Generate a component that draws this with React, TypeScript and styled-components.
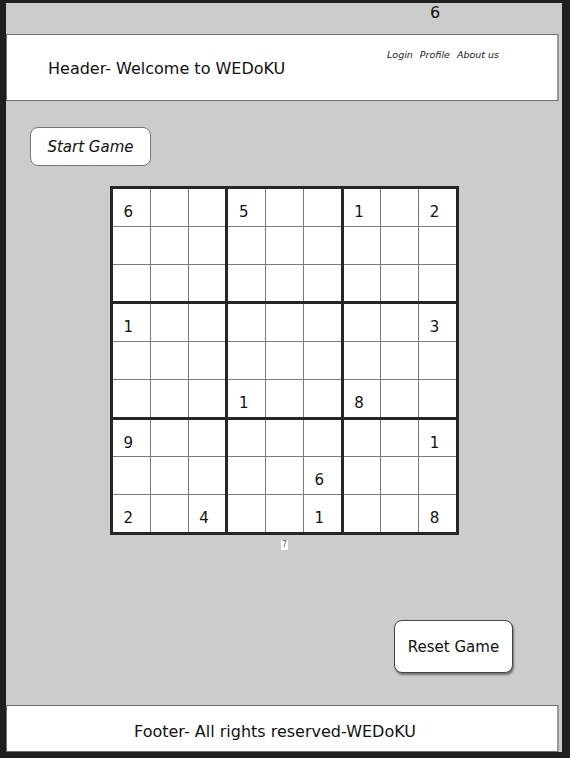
import React from "react";
import styled, { createGlobalStyle } from "styled-components";

const GlobalStyle = createGlobalStyle`
  html, body {
    margin: 0;
    padding: 0;
    background: #1f1f1f;
  }
  body {
    font-family: "Comic Sans MS", "DejaVu Sans", sans-serif;
    color: #111;
  }
`;

const Frame = styled.div`
  margin: 3px 0 0 6px;
  width: 556px;
  height: 749px;
  background: #cccccc;
  display: flex;
  flex-direction: column;
`;

const TopStrip = styled.div`
  height: 31px;
  box-sizing: border-box;
  padding-left: 424px;
  font-size: 16px;
  line-height: 20px;
`;

const Bar = styled.div<{ $foot?: boolean }>`
  box-sizing: border-box;
  width: 553px;
  height: ${(p) => (p.$foot ? "47px" : "67px")};
  background: #fff;
  border: 1px solid #6f6f6f;
  border-right: 2px solid #9a9a9a;
  display: flex;
  justify-content: ${(p) => (p.$foot ? "center" : "space-between")};
  align-items: ${(p) => (p.$foot ? "center" : "flex-start")};
  padding: ${(p) => (p.$foot ? "5px 14px 0 0" : "0 58px 0 41px")};
  font-size: 16px;
`;

const Title = styled.div`
  padding-top: 24px;
`;

const Nav = styled.nav`
  display: flex;
  gap: 7px;
  padding-top: 14px;
  font-size: 9.5px;
  font-style: italic;
  color: #222;
`;

const Main = styled.main`
  flex: 1;
  display: flex;
  flex-direction: column;
`;

const SketchButton = styled.button<{ $reset?: boolean }>`
  box-sizing: border-box;
  font-family: "Comic Sans MS", "DejaVu Sans", sans-serif;
  font-size: 15px;
  font-style: ${(p) => (p.$reset ? "normal" : "italic")};
  color: #111;
  background: #fff;
  border: 1px solid ${(p) => (p.$reset ? "#444" : "#777")};
  border-radius: 8px;
  box-shadow: ${(p) => (p.$reset ? "1px 2px 2px rgba(0,0,0,0.45)" : "none")};
  width: ${(p) => (p.$reset ? "119px" : "121px")};
  height: ${(p) => (p.$reset ? "53px" : "39px")};
  align-self: ${(p) => (p.$reset ? "flex-end" : "flex-start")};
  margin: ${(p) => (p.$reset ? "auto 49px 32px 0" : "26px 0 0 24px")};
  padding: 0;
`;

const BoardWrap = styled.div`
  align-self: flex-start;
  margin: 20px 0 0 104px;
  display: flex;
  flex-direction: column;
  align-items: center;
`;

const Board = styled.div`
  box-sizing: border-box;
  width: 349px;
  height: 349px;
  background: #262626;
  border: 3px solid #262626;
  display: grid;
  grid-template-columns: repeat(3, 1fr);
  grid-template-rows: repeat(3, 1fr);
  gap: 3px;
`;

const Block = styled.div`
  background: #7a7a7a;
  display: grid;
  grid-template-columns: repeat(3, 1fr);
  grid-template-rows: repeat(3, 1fr);
  gap: 1px;
`;

const Cell = styled.div`
  background: #fff;
  display: flex;
  align-items: center;
  justify-content: center;
  padding: 9px 6px 0 0;
  box-sizing: border-box;
  font-size: 15px;
  color: #111;
`;

const Hint = styled.div`
  margin-top: 5px;
  background: #fff;
  font-size: 8px;
  line-height: 10px;
  padding: 0 1px;
  color: #666;
`;

const givens: Record<string, number> = {
  "0-0": 6, "0-3": 5, "0-6": 1, "0-8": 2,
  "3-0": 1, "3-8": 3,
  "5-3": 1, "5-6": 8,
  "6-0": 9, "6-8": 1,
  "7-5": 6,
  "8-0": 2, "8-2": 4, "8-5": 1, "8-8": 8,
};

export default function App() {
  const blocks = [];
  for (let b = 0; b < 9; b++) {
    const br = Math.floor(b / 3) * 3;
    const bc = (b % 3) * 3;
    const cells = [];
    for (let c = 0; c < 9; c++) {
      const r = br + Math.floor(c / 3);
      const col = bc + (c % 3);
      cells.push(<Cell key={c}>{givens[`${r}-${col}`] ?? ""}</Cell>);
    }
    blocks.push(<Block key={b}>{cells}</Block>);
  }

  return (
    <>
      <GlobalStyle />
      <Frame>
        <TopStrip>6</TopStrip>
        <Bar>
          <Title>Header- Welcome to WEDoKU</Title>
          <Nav>
            <span>Login</span>
            <span>Profile</span>
            <span>About us</span>
          </Nav>
        </Bar>
        <Main>
          <SketchButton>Start Game</SketchButton>
          <BoardWrap>
            <Board>{blocks}</Board>
            <Hint>7</Hint>
          </BoardWrap>
          <SketchButton $reset>Reset Game</SketchButton>
        </Main>
        <Bar $foot>Footer- All rights reserved-WEDoKU</Bar>
      </Frame>
    </>
  );
}
